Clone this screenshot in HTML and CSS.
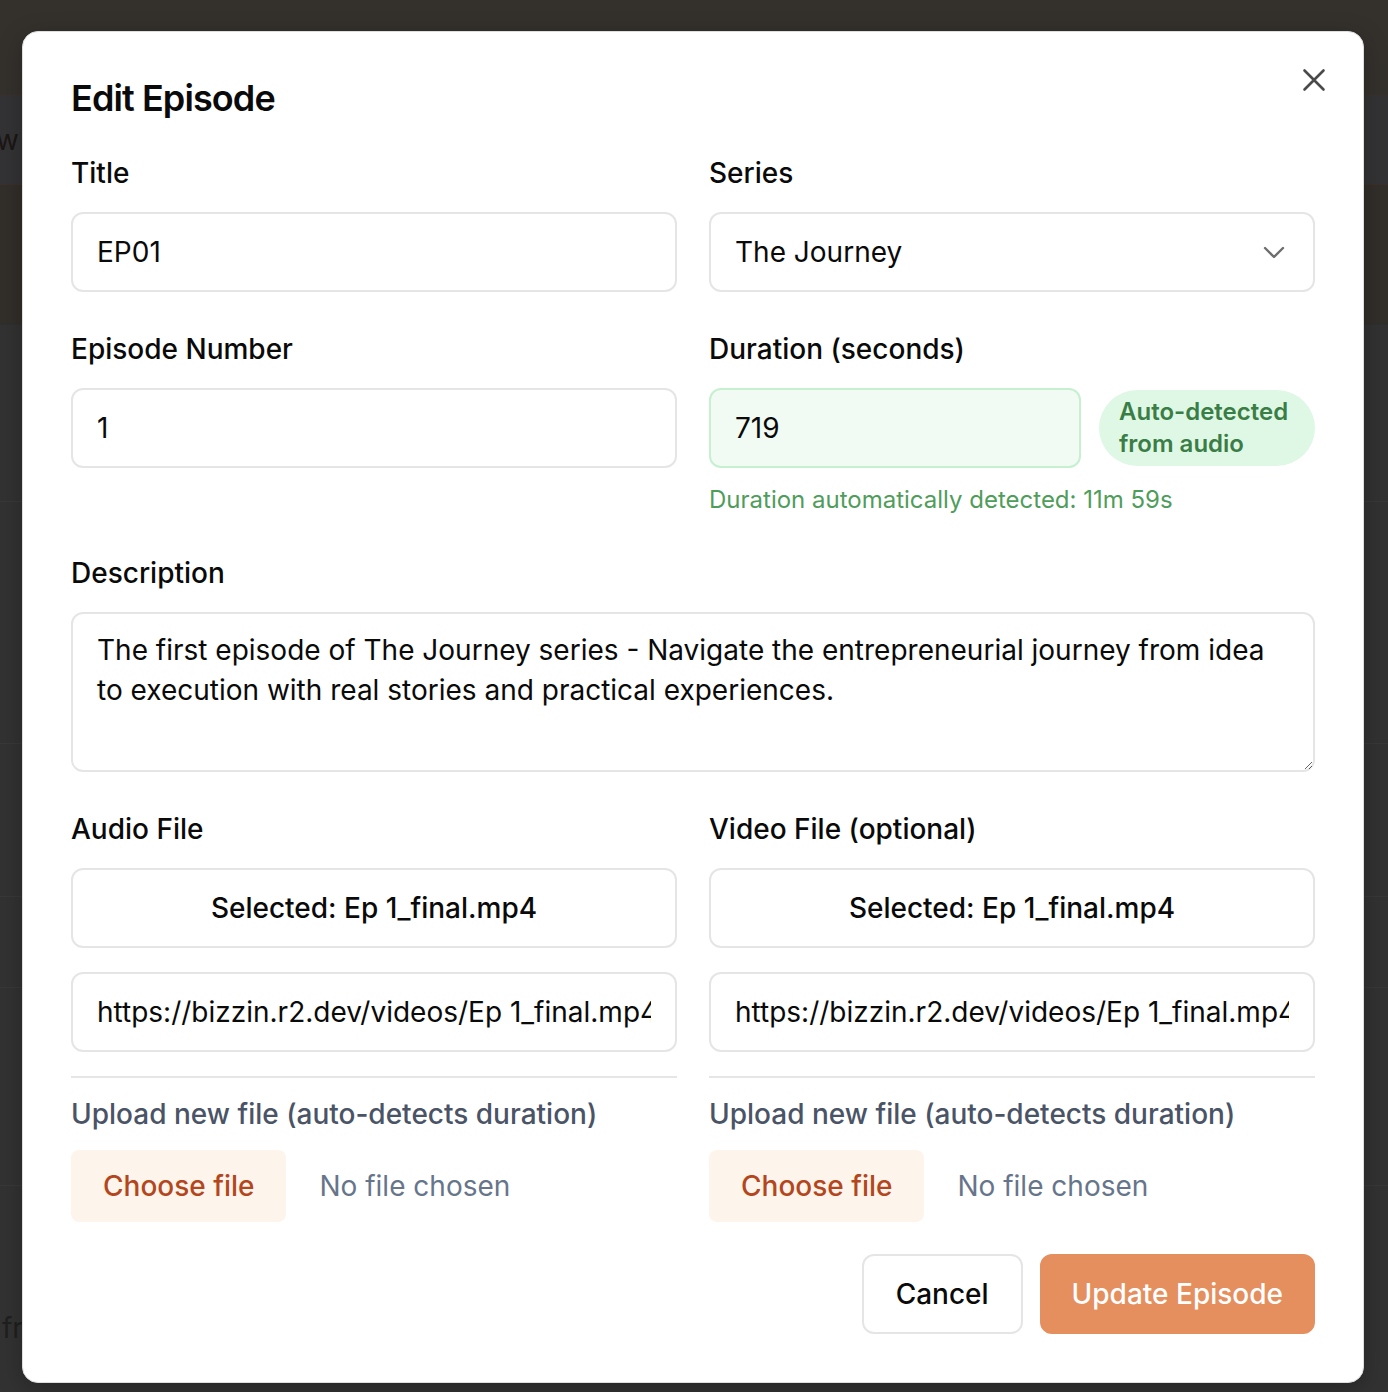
FILE: index.html
```html
<!DOCTYPE html>
<html lang="en">
<head>
<meta charset="utf-8">
<title>Edit Episode</title>
<link rel="stylesheet" href="styles.css">
</head>
<body>
<div class="backdrop">
  <div class="bg-row bg-top"></div>
  <div class="bg-row bg-nav"><span class="bg-text">w</span></div>
  <div class="bg-row bg-brown"></div>
  <div class="bg-row bg-a"></div>
  <div class="bg-row bg-b"><span class="bg-text bg-text-mid">nt</span></div>
  <div class="bg-row bg-c"></div>
  <div class="bg-row bg-d"></div>
  <div class="bg-row bg-e"></div>
  <div class="bg-row bg-f"><span class="bg-text bg-text-low">fr</span></div>
</div>

<div class="modal" role="dialog" aria-labelledby="dlg-title">
  <button class="close" aria-label="Close">
    <svg width="24" height="24" viewBox="0 0 24 24" fill="none" stroke="currentColor" stroke-width="2.6" stroke-linecap="round"><path d="M2.5 2.5 21.5 21.5M21.5 2.5 2.5 21.5"/></svg>
  </button>
  <h2 class="heading" id="dlg-title">Edit Episode</h2>

  <div class="form-grid">
    <div class="field">
      <label class="label">Title</label>
      <input class="input" type="text" value="EP01">
    </div>
    <div class="field">
      <label class="label">Series</label>
      <div class="select-wrap">
        <select class="input select"><option>The Journey</option></select>
        <svg class="chevron" width="22" height="12" viewBox="0 0 22 12" fill="none" stroke="currentColor" stroke-width="2.4" stroke-linecap="round" stroke-linejoin="round"><path d="M2 2l9 9 9-9"/></svg>
      </div>
    </div>

    <div class="field">
      <label class="label">Episode Number</label>
      <input class="input" type="text" value="1">
    </div>
    <div class="field">
      <label class="label">Duration (seconds)</label>
      <div class="duration-row">
        <input class="input input-green" type="text" value="719">
        <span class="badge">Auto-detected from audio</span>
      </div>
      <p class="helper">Duration automatically detected: 11m 59s</p>
    </div>

    <div class="field span-2">
      <label class="label">Description</label>
      <textarea class="input textarea">The first episode of The Journey series - Navigate the entrepreneurial journey from idea to execution with real stories and practical experiences.</textarea>
    </div>

    <div class="field">
      <label class="label">Audio File</label>
      <div class="selected">Selected: Ep 1_final.mp4</div>
      <input class="input url" type="text" value="https://bizzin.r2.dev/videos/Ep 1_final.mp4">
      <div class="upload">
        <p class="upload-label">Upload new file (auto-detects duration)</p>
        <div class="file-row">
          <span class="file-btn">Choose file</span>
          <span class="file-none">No file chosen</span>
        </div>
      </div>
    </div>
    <div class="field">
      <label class="label">Video File (optional)</label>
      <div class="selected">Selected: Ep 1_final.mp4</div>
      <input class="input url" type="text" value="https://bizzin.r2.dev/videos/Ep 1_final.mp4">
      <div class="upload">
        <p class="upload-label">Upload new file (auto-detects duration)</p>
        <div class="file-row">
          <span class="file-btn">Choose file</span>
          <span class="file-none">No file chosen</span>
        </div>
      </div>
    </div>
  </div>

  <div class="footer">
    <button class="btn btn-cancel">Cancel</button>
    <button class="btn btn-primary">Update Episode</button>
  </div>
</div>
</body>
</html>
```

FILE: styles.css
```css
* { box-sizing: border-box; }

html, body {
  margin: 0;
  padding: 0;
}

body {
  width: 1388px;
  height: 1392px;
  overflow: hidden;
  background: #323232;
  font-family: Inter, "Noto Sans", "Liberation Sans", sans-serif;
  color: #0a0a0a;
  position: relative;
}

/* ---------- dimmed page behind the dialog ---------- */
.backdrop {
  display: flex;
  flex-direction: column;
  height: 1392px;
}
.bg-row {
  border-bottom: 1px solid #3a3837;
  position: relative;
  flex: none;
}
.bg-top { height: 95px; background: #34312d; border-bottom-color: #3b2f2a; }
.bg-nav { height: 90px; background: #333335; border-bottom-color: #3d2f29; }
.bg-brown { height: 140px; background: #322e2a; border-bottom-color: #2f2f31; }
.bg-a { height: 177px; background: #323232; }
.bg-b { height: 242px; background: #323232; }
.bg-c { height: 153px; background: #323232; }
.bg-d { height: 91px; background: #323232; }
.bg-e { height: 198px; background: #323232; }
.bg-f { height: 206px; background: #323232; border-bottom: 0; }
.bg-text {
  position: absolute;
  left: -4px;
  top: 29px;
  font-size: 28px;
  color: #1c1614;
  line-height: 32px;
}
.bg-text-mid { top: 290px; left: -6px; }
.bg-text-low { top: 126px; left: 2px; color: #1f1f1f; }

/* ---------- dialog ---------- */
.modal {
  position: absolute;
  left: 22px;
  top: 31px;
  width: 1342px;
  background: #fff;
  border: 1px solid #dedede;
  border-radius: 16px;
  padding: 48px;
  box-shadow: 0 6px 24px rgba(0, 0, 0, 0.25);
}

.close {
  position: absolute;
  top: 36px;
  right: 37px;
  width: 24px;
  height: 24px;
  padding: 0;
  border: 0;
  background: none;
  color: #4a4a4a;
  display: flex;
  cursor: pointer;
}

.heading {
  margin: 0 0 37px;
  font-size: 36px;
  line-height: 36px;
  font-weight: 600;
  letter-spacing: -0.9px;
}

.form-grid {
  display: grid;
  grid-template-columns: 1fr 1fr;
  column-gap: 32px;
  row-gap: 37px;
}
.span-2 { grid-column: 1 / span 2; }

.field {
  display: flex;
  flex-direction: column;
  min-width: 0;
}

.label {
  font-size: 28px;
  line-height: 40px;
  font-weight: 500;
  margin-bottom: 19px;
}

.input {
  font: inherit;
  font-size: 28px;
  color: #0a0a0a;
  height: 80px;
  width: 100%;
  border: 2px solid #e5e5e5;
  border-radius: 12px;
  padding: 0 24px;
  background: #fff;
  outline: none;
}

.select-wrap { position: relative; }
.select {
  appearance: none;
  -webkit-appearance: none;
  padding-right: 64px;
}
.chevron {
  position: absolute;
  right: 30px;
  top: 34px;
  color: #6e6e6e;
  pointer-events: none;
}

.duration-row {
  display: flex;
  align-items: center;
  gap: 18px;
}
.input-green {
  flex: 1;
  background: #f1fbf3;
  border-color: #c6f0cf;
}
.badge {
  flex: none;
  width: 216px;
  height: 76px;
  border-radius: 38px;
  background: #dff8e5;
  color: #3b7d46;
  font-size: 24px;
  line-height: 32px;
  font-weight: 600;
  padding: 6px 18px 6px 20px;
  display: flex;
  align-items: center;
}
.helper {
  margin: 15px 0 0;
  font-size: 24px;
  line-height: 33px;
  color: #4f9d5a;
}

.textarea {
  height: 160px;
  padding: 16px 24px;
  line-height: 40px;
  resize: vertical;
  display: block;
}

.selected {
  height: 80px;
  border: 2px solid #e5e5e5;
  border-radius: 12px;
  display: flex;
  align-items: center;
  justify-content: center;
  font-size: 28px;
  font-weight: 500;
}
.url { margin-top: 24px; }

.upload {
  margin-top: 24px;
  border-top: 2px solid #e6e6e6;
  padding-top: 16px;
}
.upload-label {
  margin: 0 0 16px;
  font-size: 28px;
  line-height: 40px;
  font-weight: 500;
  color: #4a5466;
}
.file-row {
  display: flex;
  align-items: center;
  gap: 33px;
}
.file-btn {
  height: 72px;
  padding: 0 32px;
  display: flex;
  align-items: center;
  background: #fdf5ec;
  color: #b4461d;
  border-radius: 8px;
  font-size: 28px;
  font-weight: 500;
}
.file-none {
  font-size: 28px;
  color: #67758b;
}

.footer {
  display: flex;
  justify-content: flex-end;
  gap: 17px;
  margin-top: 32px;
}
.btn {
  height: 80px;
  padding: 0 32px;
  border-radius: 12px;
  font: inherit;
  font-size: 28px;
  font-weight: 500;
  cursor: pointer;
}
.btn-cancel {
  background: #fff;
  border: 2px solid #e5e5e5;
  color: #0a0a0a;
}
.btn-primary {
  padding: 0 30px;
  background: #e58e5e;
  border: 2px solid #e58e5e;
  color: #fff;
}
```
